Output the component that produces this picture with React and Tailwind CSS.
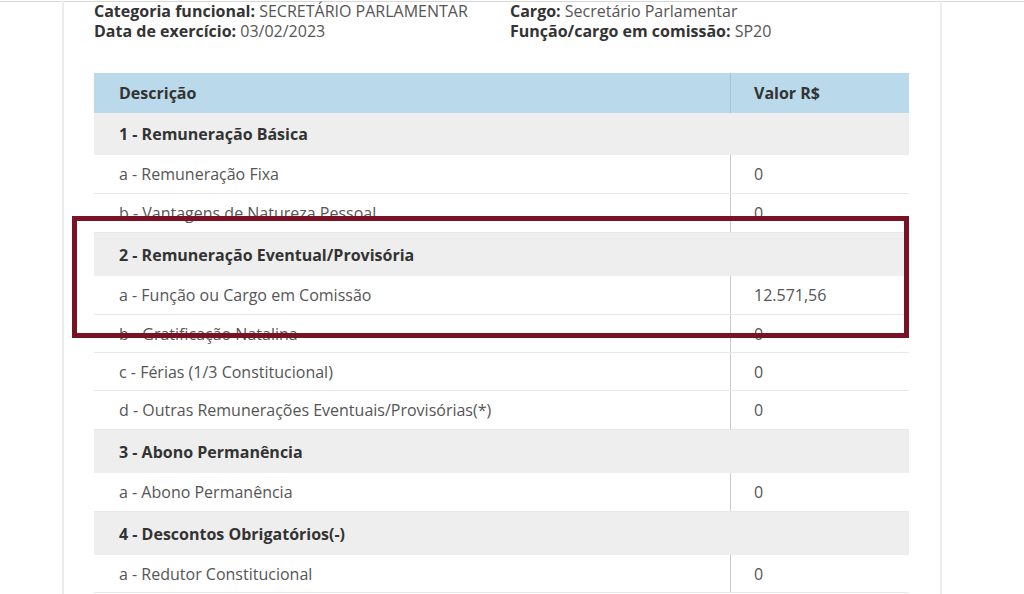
import React from "react";

const rows = [
  { t: "g", d: "1 - Remuneração Básica", h: "h-[42px]" },
  { t: "i", d: "a - Remuneração Fixa", v: "0", h: "h-[39px]" },
  { t: "i", d: "b - Vantagens de Natureza Pessoal", v: "0", h: "h-[39px]" },
  { t: "g", d: "2 - Remuneração Eventual/Provisória", h: "h-[43px]" },
  { t: "i", d: "a - Função ou Cargo em Comissão", v: "12.571,56", h: "h-[39px]" },
  { t: "i", d: "b - Gratificação Natalina", v: "0", h: "h-[38px]" },
  { t: "i", d: "c - Férias (1/3 Constitucional)", v: "0", h: "h-[38px]" },
  { t: "i", d: "d - Outras Remunerações Eventuais/Provisórias(*)", v: "0", h: "h-[39px]" },
  { t: "g", d: "3 - Abono Permanência", h: "h-[43px]" },
  { t: "i", d: "a - Abono Permanência", v: "0", h: "h-[39px]" },
  { t: "g", d: "4 - Descontos Obrigatórios(-)", h: "h-[43px]" },
  { t: "i", d: "a - Redutor Constitucional", v: "0", h: "h-[38px]" },
];

export default function App() {
  return (
    <div
      className="relative w-[1024px] h-[594px] overflow-hidden bg-white text-[16px] text-[#555]"
      style={{ fontFamily: '"Open Sans", "Noto Sans", sans-serif' }}
    >
      <div className="pt-px">
        <div className="border-t border-[#d6d6d6]">
          <div className="ml-[62px] w-[880px] h-[600px] border-x-2 border-[#ececec] pl-[30px]">
            <div className="flex leading-[20px] -mt-px">
              <div className="w-[416px]">
                <div>
                  <span className="font-bold text-[#333]">Categoria funcional:</span> SECRETÁRIO PARLAMENTAR
                </div>
                <div>
                  <span className="font-bold text-[#333]">Data de exercício:</span> 03/02/2023
                </div>
              </div>
              <div>
                <div>
                  <span className="font-bold text-[#333]">Cargo:</span> Secretário Parlamentar
                </div>
                <div>
                  <span className="font-bold text-[#333]">Função/cargo em comissão:</span> SP20
                </div>
              </div>
            </div>

            <div className="mt-[32px] w-[815px]">
              <div className="flex h-[40px] bg-[#bad9ea] font-bold text-[#333]">
                <div className="w-[637px] flex items-center pl-[25px] border-r border-[#a6c4d4]">Descrição</div>
                <div className="flex-1 flex items-center pl-[23px]">Valor R$</div>
              </div>
              {rows.map((r, i) =>
                r.t === "g" ? (
                  <div key={i} className={`${r.h} flex items-center pl-[25px] bg-[#eeeeee] font-bold text-[#333]`}>
                    {r.d}
                  </div>
                ) : (
                  <div key={i} className={`${r.h} flex border-b border-[#e8e8e8] bg-white`}>
                    <div className="w-[637px] flex items-center pl-[25px] border-r border-[#c8c8c8]">{r.d}</div>
                    <div className="flex-1 flex items-center pl-[23px]">{r.v}</div>
                  </div>
                )
              )}
            </div>
          </div>
        </div>
      </div>

      <div className="absolute left-[72px] top-[216px] w-[837px] h-[122px] border-[5px] border-[#7a1226]" />
    </div>
  );
}
